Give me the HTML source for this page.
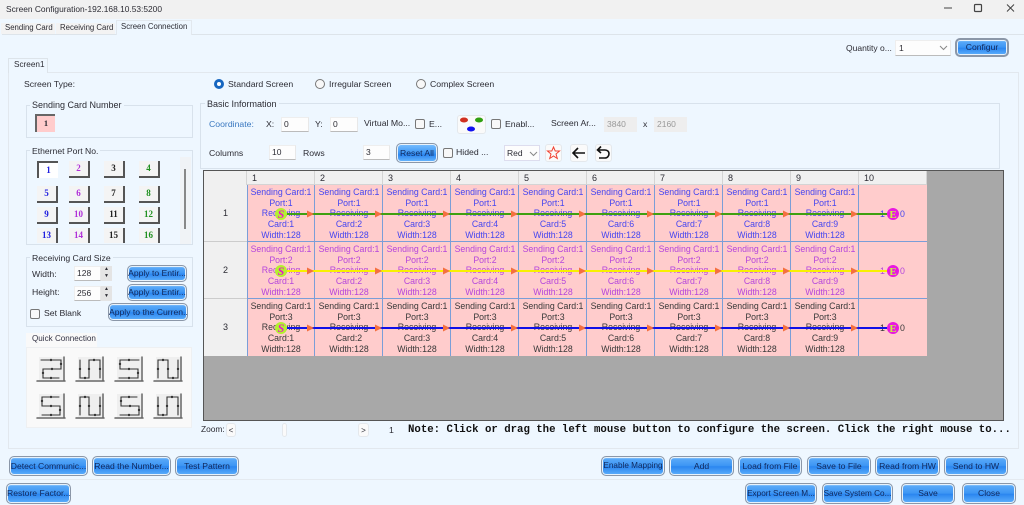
<!DOCTYPE html>
<html><head><meta charset="utf-8"><style>
html{background:#eef7ff}
html,body{margin:0;padding:0;width:1024px;height:505px;overflow:hidden}
body{background:#eef7ff;font-family:"Liberation Sans",sans-serif;font-size:8.7px;color:#2c2c34;position:relative;filter:blur(.3px)}
.a,.t,.b,.c,.h,.i,.k,.p{position:absolute;box-sizing:border-box}
.t{white-space:nowrap;line-height:12px}
.b{height:20px;border:1px solid #8b97a8;border-radius:5px;background:linear-gradient(#b4dcff 0,#58a8f8 12%,#3d96f4 48%,#2b86f0 54%,#5eb0fc 100%);box-shadow:inset 0 0 0 1px #e8f2fb;color:#10285c;text-align:center;line-height:18px;white-space:nowrap;overflow:hidden;font-size:8.6px}
.g{border:1px solid #d8e2ec}
.i{background:#fdfdfd;border-bottom:1px solid #bbb;border-top:1px solid #eee;border-left:1px solid #eee;border-right:1px solid #e8e8e8;font-size:8.5px;line-height:13px;padding-left:2px}
.k{width:10px;height:10px;border:1px solid #777;border-radius:2px;background:#f8f8f8}
.r{position:absolute;width:10px;height:10px;border-radius:50%;border:1px solid #777;background:#f8f8f8;box-sizing:border-box}
.p{width:21px;height:17px;background:#f4f4f4;border-right:2px solid #555;border-bottom:2px solid #555;text-align:center;font:bold 9px/15px "Liberation Serif",serif}
.c{width:68px;height:57px;background:#ffcccc;border-right:1px solid #7a9ed8;border-bottom:1px solid #7a9ed8;text-align:center;font-size:8.75px;line-height:10.7px;padding:2px 0 0 1px;white-space:nowrap;overflow:hidden}
.u{color:#4545f0}.v{color:#b545dc}.w{color:#383838}
.h{background:#f0f0f0;border-right:1px solid #d4d4d4;border-bottom:1px solid #d4d4d4;font-size:9px;line-height:14px;padding-left:5px;height:15px;width:68px}
.l{background:#eef7ff;padding:0 2px;font-size:9px}
.ib{position:absolute;background:#fafafa;border:1px solid #e4e8ec;border-radius:3px;box-sizing:border-box}
</style></head><body>
<!-- title bar -->
<div class="a" style="left:0;top:0;width:1024px;height:19px;background:#f1f1f1"></div>
<div class="t" style="left:6px;top:3px;font-size:8.4px">Screen Configuration-192.168.10.53:5200</div>
<svg class="a" style="left:930px;top:0" width="94" height="19" fill="none" stroke="#444"><path d="M14 8H22" stroke-width="1"/><rect x="44.500" y="4.500" width="7" height="7" rx="1" stroke-width="1.200"/><path d="M84 4.500l-7 7M77 4.500l7 7" stroke-width="1"/></svg>
<!-- outer tabs -->
<div class="a" style="left:2px;top:34px;width:1022px;height:1px;background:#dde4ea"></div>
<div class="a" style="left:1px;top:23px;width:54px;height:11px;background:#f3f3f3"></div>
<div class="a" style="left:56px;top:23px;width:59px;height:11px;background:#f3f3f3"></div>
<div class="a" style="left:116px;top:20px;width:76px;height:15px;background:#eef7ff;border:1px solid #e2e8ee;border-bottom:none;box-sizing:border-box"></div>
<div class="t" style="left:5px;top:22px;font-size:7.8px">Sending Card</div>
<div class="t" style="left:60px;top:22px;font-size:7.8px">Receiving Card</div>
<div class="t" style="left:121px;top:21px;font-size:7.8px">Screen Connection</div>
<!-- top right -->
<div class="t" style="left:846px;top:42px;font-size:8.5px">Quantity o...</div>
<div class="i" style="left:895px;top:40px;width:56px;height:16px;padding-left:3px;line-height:14px">1</div>
<svg class="a" style="left:939px;top:45px" width="9" height="6" fill="none" stroke="#888"><path d="M1 1l3.500 3.500L8 1"/></svg>
<div class="b" style="left:955px;top:38px;width:54px;height:19px;line-height:15px;border-width:2px">Configur</div>
<!-- inner panel -->
<div class="a g" style="left:8px;top:72px;width:1011px;height:377px;border-color:#e2e8ee;border-width:1px"></div>
<div class="a" style="left:8px;top:58px;width:40px;height:15px;background:#eef7ff;border:1px solid #dde4ea;border-bottom:none;box-sizing:border-box"></div>
<div class="t" style="left:14px;top:59px;font-size:8.2px">Screen1</div>
<div class="t" style="left:24px;top:78px">Screen Type:</div>
<div class="r" style="left:214px;top:79px;border:3px solid #1666c0;background:#fff"></div>
<div class="t" style="left:228px;top:78px">Standard Screen</div>
<div class="r" style="left:315px;top:79px"></div>
<div class="t" style="left:329px;top:78px">Irregular Screen</div>
<div class="r" style="left:416px;top:79px"></div>
<div class="t" style="left:430px;top:78px">Complex Screen</div>
<!-- sending card number -->
<div class="a g" style="left:26px;top:105px;width:167px;height:33px"></div>
<div class="t l" style="left:30px;top:99px">Sending Card Number</div>
<div class="a" style="left:35px;top:114px;width:20px;height:18px;background:#ffcccc;border-left:2px solid #666;border-top:2px solid #666;box-sizing:border-box;text-align:center;font:bold 8.5px/14px 'Liberation Serif',serif">1</div>
<!-- ethernet -->
<div class="a g" style="left:26px;top:150px;width:167px;height:95px"></div>
<div class="t l" style="left:30px;top:145px;font-size:8.6px">Ethernet Port No.</div>
<div class="a" style="left:180px;top:157px;width:11px;height:87px;background:#f0f3f6"></div>
<div class="a" style="left:184px;top:169px;width:2px;height:60px;background:#888"></div>
<div class="p" style="left:37px;top:161px;background:#fff;border:none;border-left:2px solid #555;border-top:2px solid #555;color:#2020e0">1</div>
<div class="p" style="left:69px;top:161px;color:#b030d8">2</div>
<div class="p" style="left:104px;top:161px;color:#222">3</div>
<div class="p" style="left:139px;top:161px;color:#209020">4</div>
<div class="p" style="left:37px;top:186px;color:#2020e0">5</div>
<div class="p" style="left:69px;top:186px;color:#b030d8">6</div>
<div class="p" style="left:104px;top:186px;color:#222">7</div>
<div class="p" style="left:139px;top:186px;color:#209020">8</div>
<div class="p" style="left:37px;top:207px;color:#2020e0">9</div>
<div class="p" style="left:69px;top:207px;color:#b030d8">10</div>
<div class="p" style="left:104px;top:207px;color:#222">11</div>
<div class="p" style="left:139px;top:207px;color:#209020">12</div>
<div class="p" style="left:37px;top:228px;height:15px;border-bottom:none;color:#2020e0">13</div>
<div class="p" style="left:69px;top:228px;height:15px;border-bottom:none;color:#b030d8">14</div>
<div class="p" style="left:104px;top:228px;height:15px;border-bottom:none;color:#222">15</div>
<div class="p" style="left:139px;top:228px;height:15px;border-bottom:none;color:#209020">16</div>
<!-- receiving card size -->
<div class="a g" style="left:26px;top:257px;width:167px;height:70px"></div>
<div class="t l" style="left:30px;top:252px;font-size:8.7px">Receiving Card Size</div>
<div class="t" style="left:32px;top:268px">Width:</div>
<div class="t" style="left:32px;top:286px">Height:</div>
<div class="i" style="left:74px;top:266px;width:27px;height:15px">128</div>
<div class="i" style="left:74px;top:286px;width:27px;height:15px">256</div>
<div class="a" style="left:101px;top:266px;width:11px;height:15px;background:#e4e4e4;font-size:5px;line-height:7px;text-align:center">▲<br>▼</div>
<div class="a" style="left:101px;top:286px;width:11px;height:15px;background:#e4e4e4;font-size:5px;line-height:7px;text-align:center">▲<br>▼</div>
<div class="b" style="left:127px;top:265px;width:60px;height:17px;line-height:15px">Apply to Entir...</div>
<div class="b" style="left:127px;top:284px;width:60px;height:17px;line-height:15px">Apply to Entir...</div>
<div class="b" style="left:108px;top:303px;width:80px;height:18px;line-height:16px">Apply to the Curren..</div>
<div class="k" style="left:30px;top:309px"></div>
<div class="t" style="left:44px;top:307px">Set Blank</div>
<!-- quick connection -->
<div class="a" style="left:26px;top:333px;width:71px;height:15px;background:#f9f9f9"></div>
<div class="t" style="left:32px;top:333px;font-size:8.1px;color:#334">Quick Connection</div>
<div class="a" style="left:26px;top:347px;width:166px;height:81px;background:#f9f9f9;border:1px solid #eef0f2;box-sizing:border-box"></div>
<svg class="a" style="left:36px;top:356px" width="150" height="64" fill="none">
<defs>
<g id="bx"><rect x="2" y="0" width="24" height="23" fill="#efefef" stroke="none"/><path d="M27 0V24M0 24H28" stroke="#666" stroke-width="1.500"/></g>
</defs>
<g stroke="#333" stroke-width="1.100" stroke-linecap="round">
<g transform="translate(1 1)"><use href="#bx"/><path d="M4 3H24V12H6V21H22"/><path stroke-width="2.400" d="M14 3h0M24 7h0M15 12h0M6 16h0M14 21h0"/></g>
<g transform="translate(40 1)"><use href="#bx"/><path d="M4 3V21H13V3H24V21"/><path stroke-width="2.400" d="M4 12h0M9 21h0M13 12h0M18 3h0M24 12h0"/></g>
<g transform="translate(79 1)"><use href="#bx"/><path d="M24 3H5V12H23V21H4"/><path stroke-width="2.400" d="M14 3h0M5 7h0M14 12h0M23 16h0M14 21h0"/></g>
<g transform="translate(118 1)"><use href="#bx"/><path d="M4 21V3H14V21H24V3"/><path stroke-width="2.400" d="M4 12h0M9 3h0M14 12h0M19 21h0M24 12h0"/></g>
<g transform="translate(1 38)"><use href="#bx"/><path d="M22 3H5V12H23V21H5"/><path stroke-width="2.400" d="M14 3h0M5 7h0M14 12h0M23 16h0M14 21h0"/></g>
<g transform="translate(40 38)"><use href="#bx"/><path d="M4 21V3H13V21H24V3"/><path stroke-width="2.400" d="M4 12h0M9 3h0M13 12h0M19 21h0M24 12h0"/></g>
<g transform="translate(79 38)"><use href="#bx"/><path d="M5 21H24V12H6V3H22"/><path stroke-width="2.400" d="M14 21h0M24 16h0M15 12h0M6 7h0M14 3h0"/></g>
<g transform="translate(118 38)"><use href="#bx"/><path d="M4 3V21H13V3H24V21"/><path stroke-width="2.400" d="M4 12h0M9 21h0M13 12h0M18 3h0M24 12h0"/></g>
</g>
</svg>
<!-- basic information -->
<div class="a g" style="left:200px;top:103px;width:800px;height:66px"></div>
<div class="t l" style="left:205px;top:98px">Basic Information</div>
<div class="t" style="left:209px;top:118px;color:#3a78c0">Coordinate:</div>
<div class="t" style="left:266px;top:118px">X:</div>
<div class="i" style="left:281px;top:117px;width:28px;height:15px">0</div>
<div class="t" style="left:315px;top:118px">Y:</div>
<div class="i" style="left:330px;top:117px;width:28px;height:15px">0</div>
<div class="t" style="left:364px;top:117px;font-size:8.7px">Virtual Mo...</div>
<div class="k" style="left:415px;top:119px"></div>
<div class="t" style="left:429px;top:118px">E...</div>
<div class="ib" style="left:457px;top:115px;width:29px;height:19px"></div>
<svg class="a" style="left:457px;top:115px" width="29" height="19"><ellipse cx="7" cy="5" rx="4" ry="2.500" fill="#d03020"/><ellipse cx="22" cy="5" rx="4" ry="2.500" fill="#30a010"/><ellipse cx="14" cy="14" rx="4" ry="2.500" fill="#1010f0"/></svg>
<div class="k" style="left:491px;top:119px"></div>
<div class="t" style="left:505px;top:118px">Enabl...</div>
<div class="t" style="left:551px;top:117px;font-size:8.7px">Screen Ar...</div>
<div class="i" style="left:604px;top:117px;width:33px;height:15px;background:#eee;color:#999;border:1px solid #eee">3840</div>
<div class="t" style="left:643px;top:118px">x</div>
<div class="i" style="left:654px;top:117px;width:33px;height:15px;background:#eee;color:#999;border:1px solid #eee">2160</div>
<div class="t" style="left:209px;top:147px">Columns</div>
<div class="i" style="left:269px;top:145px;width:27px;height:15px">10</div>
<div class="t" style="left:303px;top:147px">Rows</div>
<div class="i" style="left:363px;top:145px;width:27px;height:15px">3</div>
<div class="b" style="left:396px;top:143px;width:42px;height:20px;border-width:1px;line-height:18px;background:linear-gradient(#7cc0ff,#3d96f4 50%,#2b86f0 60%,#6ab8ff)">Reset All</div>
<div class="k" style="left:443px;top:148px"></div>
<div class="t" style="left:456px;top:146px">Hided ...</div>
<div class="i" style="left:504px;top:145px;width:36px;height:16px;line-height:14px;border:1px solid #dde">Red</div>
<svg class="a" style="left:529px;top:151px" width="9" height="6" fill="none" stroke="#888"><path d="M1 1l3.500 3.500L8 1"/></svg>
<div class="ib" style="left:545px;top:144px;width:17px;height:18px"></div>
<svg class="a" style="left:545px;top:144px" width="17" height="18" fill="none" stroke="#f04030" stroke-width="1"><path d="M8.500 3l1.700 4H14.500L11 10l1.300 4.500L8.500 12l-3.800 2.500L6 10 2.500 7H6.800z"/></svg>
<div class="ib" style="left:570px;top:144px;width:18px;height:18px"></div>
<svg class="a" style="left:570px;top:144px" width="18" height="18" fill="none" stroke="#111" stroke-width="1.600"><path d="M15 9H3M8 4L3 9l5 5"/></svg>
<div class="ib" style="left:595px;top:144px;width:17px;height:18px"></div>
<svg class="a" style="left:595px;top:144px" width="17" height="18" fill="none" stroke="#111" stroke-width="1.600"><path d="M6 2.500L2.500 6 6 9M3 6H10c2.500 0 4 1.700 4 3.700S12.500 14 10 14H4"/></svg>
<!-- table -->
<div class="a" style="left:203px;top:170px;width:801px;height:251px;background:#a8a8a8;border:1px solid #555;box-sizing:border-box"></div>
<div class="a" style="left:204px;top:171px;width:43px;height:14px;background:#f0f0f0;border-right:1px solid #d4d4d4;box-sizing:border-box"></div>
<div class="h" style="left:247px;top:171px;height:14px">1</div><div class="h" style="left:315px;top:171px;height:14px">2</div><div class="h" style="left:383px;top:171px;height:14px">3</div><div class="h" style="left:451px;top:171px;height:14px">4</div><div class="h" style="left:519px;top:171px;height:14px">5</div><div class="h" style="left:587px;top:171px;height:14px">6</div><div class="h" style="left:655px;top:171px;height:14px">7</div><div class="h" style="left:723px;top:171px;height:14px">8</div><div class="h" style="left:791px;top:171px;height:14px">9</div><div class="h" style="left:859px;top:171px;height:14px">10</div>
<div class="a" style="left:204px;top:185px;width:43px;height:57px;background:#f0f0f0;border-bottom:1px solid #ccc;box-sizing:border-box;text-align:center;line-height:56px;font-size:9px">1</div>
<div class="a" style="left:204px;top:242px;width:43px;height:57px;background:#f0f0f0;border-bottom:1px solid #ccc;box-sizing:border-box;text-align:center;line-height:56px;font-size:9px">2</div>
<div class="a" style="left:204px;top:299px;width:43px;height:57px;background:#f0f0f0;box-sizing:border-box;text-align:center;line-height:56px;font-size:9px">3</div>

<div class="c u" style="left:247px;top:185px">Sending Card:1<br>Port:1<br>Receiving<br>Card:1<br>Width:128</div>
<div class="c u" style="left:315px;top:185px">Sending Card:1<br>Port:1<br>Receiving<br>Card:2<br>Width:128</div>
<div class="c u" style="left:383px;top:185px">Sending Card:1<br>Port:1<br>Receiving<br>Card:3<br>Width:128</div>
<div class="c u" style="left:451px;top:185px">Sending Card:1<br>Port:1<br>Receiving<br>Card:4<br>Width:128</div>
<div class="c u" style="left:519px;top:185px">Sending Card:1<br>Port:1<br>Receiving<br>Card:5<br>Width:128</div>
<div class="c u" style="left:587px;top:185px">Sending Card:1<br>Port:1<br>Receiving<br>Card:6<br>Width:128</div>
<div class="c u" style="left:655px;top:185px">Sending Card:1<br>Port:1<br>Receiving<br>Card:7<br>Width:128</div>
<div class="c u" style="left:723px;top:185px">Sending Card:1<br>Port:1<br>Receiving<br>Card:8<br>Width:128</div>
<div class="c u" style="left:791px;top:185px">Sending Card:1<br>Port:1<br>Receiving<br>Card:9<br>Width:128</div>
<div class="c u" style="left:859px;top:185px;border-right:none"></div>

<div class="c v" style="left:247px;top:242px">Sending Card:1<br>Port:2<br>Receiving<br>Card:1<br>Width:128</div>
<div class="c v" style="left:315px;top:242px">Sending Card:1<br>Port:2<br>Receiving<br>Card:2<br>Width:128</div>
<div class="c v" style="left:383px;top:242px">Sending Card:1<br>Port:2<br>Receiving<br>Card:3<br>Width:128</div>
<div class="c v" style="left:451px;top:242px">Sending Card:1<br>Port:2<br>Receiving<br>Card:4<br>Width:128</div>
<div class="c v" style="left:519px;top:242px">Sending Card:1<br>Port:2<br>Receiving<br>Card:5<br>Width:128</div>
<div class="c v" style="left:587px;top:242px">Sending Card:1<br>Port:2<br>Receiving<br>Card:6<br>Width:128</div>
<div class="c v" style="left:655px;top:242px">Sending Card:1<br>Port:2<br>Receiving<br>Card:7<br>Width:128</div>
<div class="c v" style="left:723px;top:242px">Sending Card:1<br>Port:2<br>Receiving<br>Card:8<br>Width:128</div>
<div class="c v" style="left:791px;top:242px">Sending Card:1<br>Port:2<br>Receiving<br>Card:9<br>Width:128</div>
<div class="c v" style="left:859px;top:242px;border-right:none"></div>

<div class="c w" style="left:247px;top:299px;border-bottom:none">Sending Card:1<br>Port:3<br>Receiving<br>Card:1<br>Width:128</div>
<div class="c w" style="left:315px;top:299px;border-bottom:none">Sending Card:1<br>Port:3<br>Receiving<br>Card:2<br>Width:128</div>
<div class="c w" style="left:383px;top:299px;border-bottom:none">Sending Card:1<br>Port:3<br>Receiving<br>Card:3<br>Width:128</div>
<div class="c w" style="left:451px;top:299px;border-bottom:none">Sending Card:1<br>Port:3<br>Receiving<br>Card:4<br>Width:128</div>
<div class="c w" style="left:519px;top:299px;border-bottom:none">Sending Card:1<br>Port:3<br>Receiving<br>Card:5<br>Width:128</div>
<div class="c w" style="left:587px;top:299px;border-bottom:none">Sending Card:1<br>Port:3<br>Receiving<br>Card:6<br>Width:128</div>
<div class="c w" style="left:655px;top:299px;border-bottom:none">Sending Card:1<br>Port:3<br>Receiving<br>Card:7<br>Width:128</div>
<div class="c w" style="left:723px;top:299px;border-bottom:none">Sending Card:1<br>Port:3<br>Receiving<br>Card:8<br>Width:128</div>
<div class="c w" style="left:791px;top:299px;border-bottom:none">Sending Card:1<br>Port:3<br>Receiving<br>Card:9<br>Width:128</div>
<div class="c w" style="left:859px;top:299px;border-bottom:none;border-right:none"></div>

<div class="a" style="left:247px;top:185px;width:1px;height:171px;background:#7a9ed8"></div>
<div class="t u" style="left:880px;top:208px;font-size:8.8px">1</div><div class="t u" style="left:900px;top:208px;font-size:8.8px">0</div>
<div class="t v" style="left:880px;top:265px;font-size:8.8px">1</div><div class="t v" style="left:900px;top:265px;font-size:8.8px">0</div>
<div class="t w" style="left:880px;top:322px;font-size:8.8px">1</div><div class="t w" style="left:900px;top:322px;font-size:8.8px">0</div>

<svg class="a" style="left:0;top:0" width="1024" height="505">
<defs><path id="ar" d="M-7 -3.500L0 0L-7 3.500z" fill="#f47040"/></defs>
<path d="M281 214H893" stroke="#3fa010" stroke-width="2"/>
<path d="M281 271H893" stroke="#f8f000" stroke-width="2"/>
<path d="M281 328H893" stroke="#1010e8" stroke-width="2"/>
<g><use href="#ar" x="314" y="214"/><use href="#ar" x="382" y="214"/><use href="#ar" x="450" y="214"/><use href="#ar" x="518" y="214"/><use href="#ar" x="586" y="214"/><use href="#ar" x="654" y="214"/><use href="#ar" x="722" y="214"/><use href="#ar" x="790" y="214"/><use href="#ar" x="858" y="214"/></g>
<g><use href="#ar" x="314" y="271"/><use href="#ar" x="382" y="271"/><use href="#ar" x="450" y="271"/><use href="#ar" x="518" y="271"/><use href="#ar" x="586" y="271"/><use href="#ar" x="654" y="271"/><use href="#ar" x="722" y="271"/><use href="#ar" x="790" y="271"/><use href="#ar" x="858" y="271"/></g>
<g><use href="#ar" x="314" y="328"/><use href="#ar" x="382" y="328"/><use href="#ar" x="450" y="328"/><use href="#ar" x="518" y="328"/><use href="#ar" x="586" y="328"/><use href="#ar" x="654" y="328"/><use href="#ar" x="722" y="328"/><use href="#ar" x="790" y="328"/><use href="#ar" x="858" y="328"/></g>
<g fill="#b4f030"><circle cx="281" cy="214" r="6"/><circle cx="281" cy="271" r="6"/><circle cx="281" cy="328" r="6"/></g>
<g fill="#e818e0"><circle cx="893" cy="214" r="6"/><circle cx="893" cy="271" r="6"/><circle cx="893" cy="328" r="6"/></g>
<g font-family="Liberation Serif,serif" font-size="12" font-weight="bold" text-anchor="middle">
<g fill="#e818c8" font-style="italic"><text x="281" y="218">S</text><text x="281" y="275">S</text><text x="281" y="332">S</text></g>
<g fill="#c8f040" font-size="11"><text x="893" y="218">E</text><text x="893" y="275">E</text><text x="893" y="332">E</text></g>
</g>
</svg>
<!-- zoom row -->
<div class="t" style="left:201px;top:423px;font-size:8.4px">Zoom:</div>
<div class="ib" style="left:226px;top:423px;width:10px;height:14px;font-size:8px;line-height:13px;text-align:center">&lt;</div>
<div class="ib" style="left:282px;top:423px;width:5px;height:14px"></div>
<div class="ib" style="left:358px;top:423px;width:11px;height:14px;font-size:8px;line-height:13px;text-align:center">&gt;</div>
<div class="t" style="left:389px;top:424px">1</div>
<div class="t" style="left:408px;top:424px;font:bold 10.7px/12px 'Liberation Mono',monospace;color:#111">Note: Click or drag the left mouse button to configure the screen. Click the right mouse to...</div>
<!-- separators -->
<div class="a" style="left:0;top:479px;width:1024px;height:1px;background:#e4eaf0"></div>
<!-- bottom buttons -->
<div class="b" style="left:9px;top:456px;width:79px">Detect Communic...</div>
<div class="b" style="left:92px;top:456px;width:79px">Read the Number...</div>
<div class="b" style="left:175px;top:456px;width:64px">Test Pattern</div>
<div class="b" style="left:601px;top:456px;width:64px;font-size:8.2px">Enable Mapping</div>
<div class="b" style="left:669px;top:456px;width:65px">Add</div>
<div class="b" style="left:738px;top:456px;width:64px">Load from File</div>
<div class="b" style="left:807px;top:456px;width:64px">Save to File</div>
<div class="b" style="left:875px;top:456px;width:65px">Read from HW</div>
<div class="b" style="left:944px;top:456px;width:64px">Send to HW</div>
<div class="b" style="left:6px;top:483px;width:65px;height:21px;line-height:19px">Restore Factor...</div>
<div class="b" style="left:745px;top:483px;width:72px;height:21px;line-height:19px;font-size:8.2px">Export Screen M...</div>
<div class="b" style="left:822px;top:483px;width:71px;height:21px;line-height:19px;font-size:8.2px">Save System Co...</div>
<div class="b" style="left:901px;top:483px;width:54px;height:21px;line-height:19px">Save</div>
<div class="b" style="left:962px;top:483px;width:54px;height:21px;line-height:19px">Close</div>
</body></html>
